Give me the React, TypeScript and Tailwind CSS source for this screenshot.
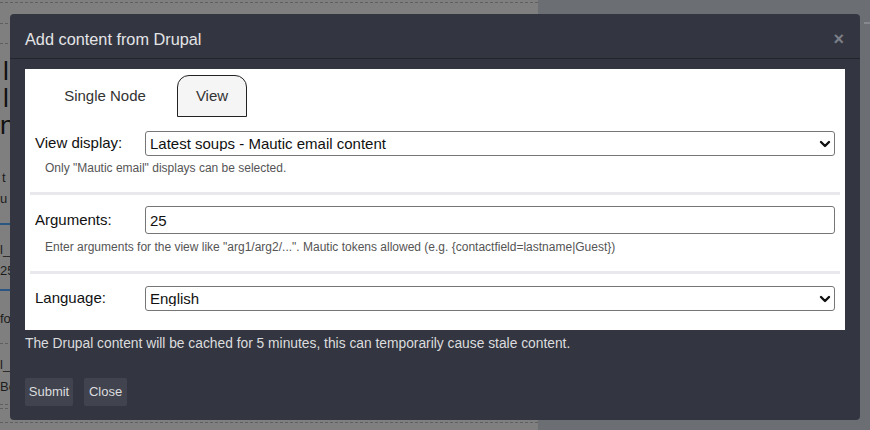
import React from "react";

const font = { fontFamily: '"Liberation Sans", Arial, sans-serif' };

function Chevron() {
  return (
    <svg
      className="pointer-events-none absolute right-[4px] top-1/2 -translate-y-1/2"
      width="12"
      height="10"
      viewBox="0 0 12 10"
    >
      <path d="M2 3 L6 7 L10 3" fill="none" stroke="#111" strokeWidth="2.4" strokeLinecap="round" strokeLinejoin="round" />
    </svg>
  );
}

function SelectBox({ value }: { value: string }) {
  return (
    <div className="relative w-[690px] h-[25px]">
      <select
        className="appearance-none w-full h-full border border-[#767676] rounded-[3px] bg-white pl-[4px] text-[15px] text-[#111] leading-none outline-none"
        style={font}
        defaultValue={value}
      >
        <option>{value}</option>
      </select>
      <Chevron />
    </div>
  );
}

function Separator() {
  return <div className="mx-[5px] h-[3px] bg-[#e9e9ed]" />;
}

export default function App() {
  return (
    <div className="relative w-[870px] h-[430px] overflow-hidden flex" style={font}>
      {/* background page under overlay */}
      <div className="w-[538px] h-full bg-[#7f7f7f] flex flex-col text-[#151515]">
        <div className="mt-[2px] border-t border-dashed border-[#5f5f5f]" />
        <div className="mt-[20px] border-t border-dashed border-[#5f5f5f]" />
        <div className="mt-[19px] border-t border-dashed border-[#5f5f5f]" />
        <div className="mt-[14px] flex flex-col text-[26px] leading-[27px] text-[#111]">
          <span className="ml-[3px]">l</span>
          <span className="ml-[3px]">l</span>
          <span className="ml-0">nl</span>
        </div>
        <div className="mt-[28px] flex flex-col text-[13px] leading-[21px] text-[#1c1c1c]">
          <span className="ml-[2px]">t</span>
          <span className="ml-0">u</span>
        </div>
        <div className="mt-[14px] h-[2px] bg-[#2b5582]" />
        <div className="mt-[14px] flex flex-col text-[13px] leading-[21px] text-[#1c1c1c]">
          <span className="ml-0">l_</span>
          <span className="ml-0">25</span>
        </div>
        <div className="mt-[8px] h-[2px] bg-[#2b5582]" />
        <div className="mt-[20px] text-[13px] leading-[16px] text-[#1c1c1c]">
          <span className="ml-0">fo</span>
        </div>
        <div className="mt-[16px] border-t border-dashed border-[#5f5f5f]" />
        <div className="mt-[10px] flex flex-col text-[13px] leading-[22px] text-[#1c1c1c]">
          <span className="ml-0">l_</span>
          <span className="ml-0">Bo</span>
        </div>
        <div className="mt-[6px] border-t border-dashed border-[#5f5f5f]" />
        <div className="mt-[3px] border-t border-dashed border-[#5f5f5f]" />
        <div className="mt-[13px] border-t border-dashed border-[#5f5f5f]" />
      </div>
      <div className="flex-1 h-full bg-[#6b6e73] flex flex-col">
        <div className="mt-[22px] border-t-2 border-dashed border-[#85888d]" />
      </div>

      {/* modal */}
      <div className="absolute left-[10px] top-[14px] w-[850px] h-[406px] rounded-[4px] bg-[#333641] flex flex-col">
        <div className="h-[45px] flex items-center justify-between pl-[15px] pr-[16px] border-b border-[#23252d]">
          <span className="text-[16.3px] text-[#e4e4e6] pt-[6px]">Add content from Drupal</span>
          <span className="text-[#7c7f87] text-[18px] font-bold pt-[6px] leading-none">×</span>
        </div>

        <div className="mx-[15px] mt-[10px] h-[261px] bg-white flex flex-col">
          {/* tabs */}
          <div className="flex items-end h-[48px] pl-[14px]">
            <div className="w-[132px] h-[42px] flex items-center justify-center text-[15px] text-[#333]">
              Single Node
            </div>
            <div className="ml-[6px] w-[70px] h-[42px] flex items-center justify-center border border-[#222] rounded-t-[12px] bg-[#f5f5f5] text-[15px] text-[#333]">
              View
            </div>
          </div>

          <div className="px-[10px]">
            <div className="mt-[14px] flex items-center">
              <span className="w-[110px] text-[15px] text-[#111]">View display:</span>
              <SelectBox value="Latest soups - Mautic email content" />
            </div>
            <div className="mt-[5px] pl-[10px] text-[12px] leading-[14px] text-[#555]">
              Only "Mautic email" displays can be selected.
            </div>
          </div>
          <div className="mt-[17px]"><Separator /></div>

          <div className="px-[10px]">
            <div className="mt-[11px] flex items-center">
              <span className="w-[110px] text-[15px] text-[#111]">Arguments:</span>
              <input
                className="w-[690px] h-[28px] border border-[#767676] rounded-[3px] bg-white pl-[4px] text-[15px] text-[#111] outline-none"
                style={font}
                defaultValue="25"
              />
            </div>
            <div className="mt-[6px] pl-[10px] text-[12px] leading-[14px] text-[#555]">
              Enter arguments for the view like "arg1/arg2/...". Mautic tokens allowed (e.g. {"{contactfield=lastname|Guest}"})
            </div>
          </div>
          <div className="mt-[17px]"><Separator /></div>

          <div className="px-[10px]">
            <div className="mt-[12px] flex items-center">
              <span className="w-[110px] text-[15px] text-[#111]">Language:</span>
              <SelectBox value="English" />
            </div>
          </div>
        </div>

        <div className="mx-[15px] mt-[6px] text-[13.8px] leading-[16px] text-[#dcdcde]">
          The Drupal content will be cached for 5 minutes, this can temporarily cause stale content.
        </div>

        <div className="mx-[15px] mt-[26px] flex gap-[11px]">
          <button className="w-[48px] h-[28px] rounded-[2px] bg-[#41444e] text-[13px] text-[#dcdcde]" style={font}>
            Submit
          </button>
          <button className="w-[43px] h-[28px] rounded-[2px] bg-[#41444e] text-[13px] text-[#dcdcde]" style={font}>
            Close
          </button>
        </div>
      </div>
    </div>
  );
}
